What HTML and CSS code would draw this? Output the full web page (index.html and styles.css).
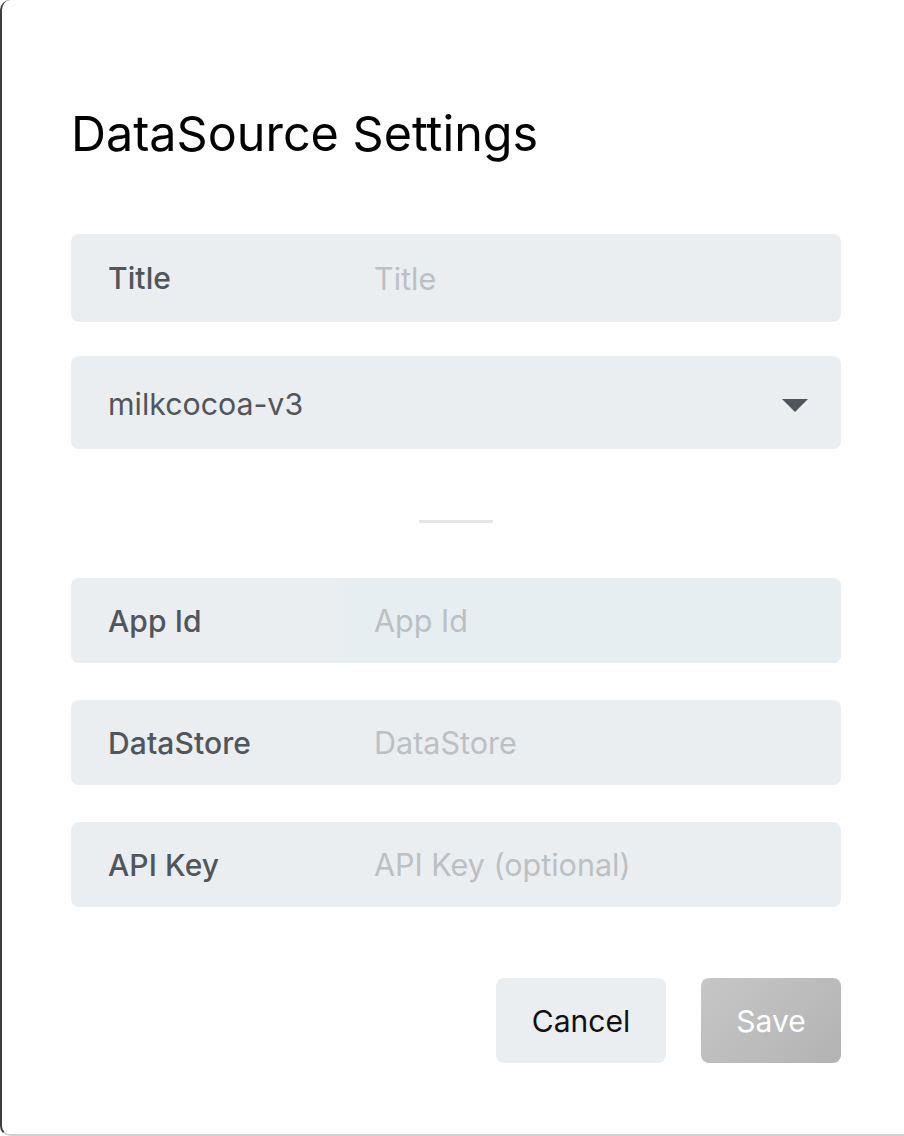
FILE: index.html
```html
<!DOCTYPE html>
<html>
<head>
<meta charset="utf-8">
<link rel="stylesheet" href="styles.css">
</head>
<body>
<div class="modal">
  <h1 class="heading">DataSource Settings</h1>
  <div class="field">
    <span class="label">Title</span>
    <span class="input placeholder">Title</span>
  </div>
  <div class="select">
    <span class="select-value">milkcocoa-v3</span>
    <svg class="caret" width="26" height="13" viewBox="0 0 26 13"><path d="M0 0 H26 L13 13 Z" fill="#50565b"/></svg>
  </div>
  <div class="divider"></div>
  <div class="field">
    <span class="label">App Id</span>
    <span class="input placeholder focus">App Id</span>
  </div>
  <div class="field">
    <span class="label">DataStore</span>
    <span class="input placeholder">DataStore</span>
  </div>
  <div class="field">
    <span class="label">API Key</span>
    <span class="input placeholder">API Key (optional)</span>
  </div>
  <div class="actions">
    <button class="btn btn-cancel">Cancel</button>
    <button class="btn btn-save">Save</button>
  </div>
</div>
</body>
</html>
```
FILE: styles.css
```css
html, body {
  margin: 0;
  padding: 0;
  background: #ffffff;
}
body {
  font-family: Inter, "Noto Sans", sans-serif;
  width: 904px;
  height: 1136px;
  overflow: hidden;
}
.modal {
  box-sizing: border-box;
  width: 904px;
  height: 1136px;
  border-left: 2px solid #3d3d3d;
  border-bottom: 2px solid #d2d2d2;
  border-radius: 10px 0 0 10px;
  padding: 102px 63px 0 69px;
  display: flex;
  flex-direction: column;
}
.heading {
  margin: 0 0 68px 0;
  font-size: 48.5px;
  font-weight: 400;
  line-height: 64px;
  color: #000;
  letter-spacing: 0;
}
.field {
  display: flex;
  align-items: center;
  height: 85px;
  background: #ebeef0;
  border-radius: 8px;
  margin-bottom: 37px;
  overflow: hidden;
}
.field:first-of-type {
  height: 88px;
  margin-bottom: 34px;
}
.label {
  width: 266px;
  box-sizing: border-box;
  padding-left: 37px;
  font-size: 30px;
  color: #50565b;
  font-weight: 500;
  letter-spacing: 0.1px;
}
.input {
  flex: 1;
  align-self: stretch;
  display: flex;
  align-items: center;
  padding-left: 37px;
  font-size: 30.5px;
}
.placeholder {
  color: #bcc0c3;
}
.focus {
  background: #e7eef1;
}
.select {
  display: flex;
  align-items: center;
  justify-content: space-between;
  height: 93px;
  background: #ebeef0;
  border-radius: 8px;
  padding: 0 33px 0 37px;
}
.select-value {
  font-size: 30.3px;
  color: #50565b;
  margin-top: 2px;
}
.caret {
  display: block;
  margin-top: 6px;
}
.divider {
  align-self: center;
  width: 74px;
  height: 3px;
  background: #e6e6e6;
  margin: 71px 0 55px 0;
}
.actions {
  display: flex;
  justify-content: flex-end;
  gap: 35px;
  margin-top: 34px;
}
.btn {
  height: 85px;
  border: none;
  border-radius: 8px;
  font-family: Inter, "Noto Sans", sans-serif;
  font-size: 30px;
}
.btn-cancel {
  width: 170px;
  background: #ebeef0;
  color: #111;
}
.btn-save {
  width: 140px;
  background: linear-gradient(135deg, #c6c6c6, #b3b3b3);
  color: #ffffff;
}
```
